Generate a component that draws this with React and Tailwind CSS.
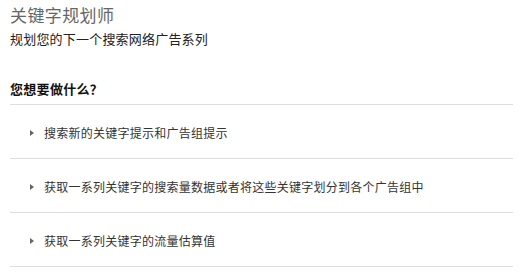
export default function App() {
  const rows = [
    "搜索新的关键字提示和广告组提示",
    "获取一系列关键字的搜索量数据或者将这些关键字划分到各个广告组中",
    "获取一系列关键字的流量估算值",
  ];
  return (
    <div
      className="w-[531px] h-[279px] bg-white pl-[10px] pr-[18px] pt-[5px] overflow-hidden"
      style={{ fontFamily: '"Noto Sans CJK SC", "Noto Sans", sans-serif' }}
    >
      <div className="text-[17px] leading-[20px] text-[#666] tracking-[0.4px]">关键字规划师</div>
      <div className="text-[13px] leading-[18px] text-[#222] mt-[5px] tracking-[0.2px]">
        规划您的下一个搜索网络广告系列
      </div>
      <div className="text-[13px] leading-[18px] font-bold text-[#111] mt-[32px] tracking-[0.3px]">
        您想要做什么？
      </div>
      <div className="mt-[6px] border-t border-[#dddddd]">
        {rows.map((r) => (
          <div
            key={r}
            className="h-[54px] border-b border-[#dddddd] flex items-center pt-[2px] pl-[20px]"
          >
            <span className="w-0 h-0 border-y-[3.5px] border-y-transparent border-l-[4px] border-l-[#666] mr-[10px]" />
            <span className="text-[12px] leading-[16px] text-[#333] tracking-[0.25px]">{r}</span>
          </div>
        ))}
      </div>
    </div>
  );
}
